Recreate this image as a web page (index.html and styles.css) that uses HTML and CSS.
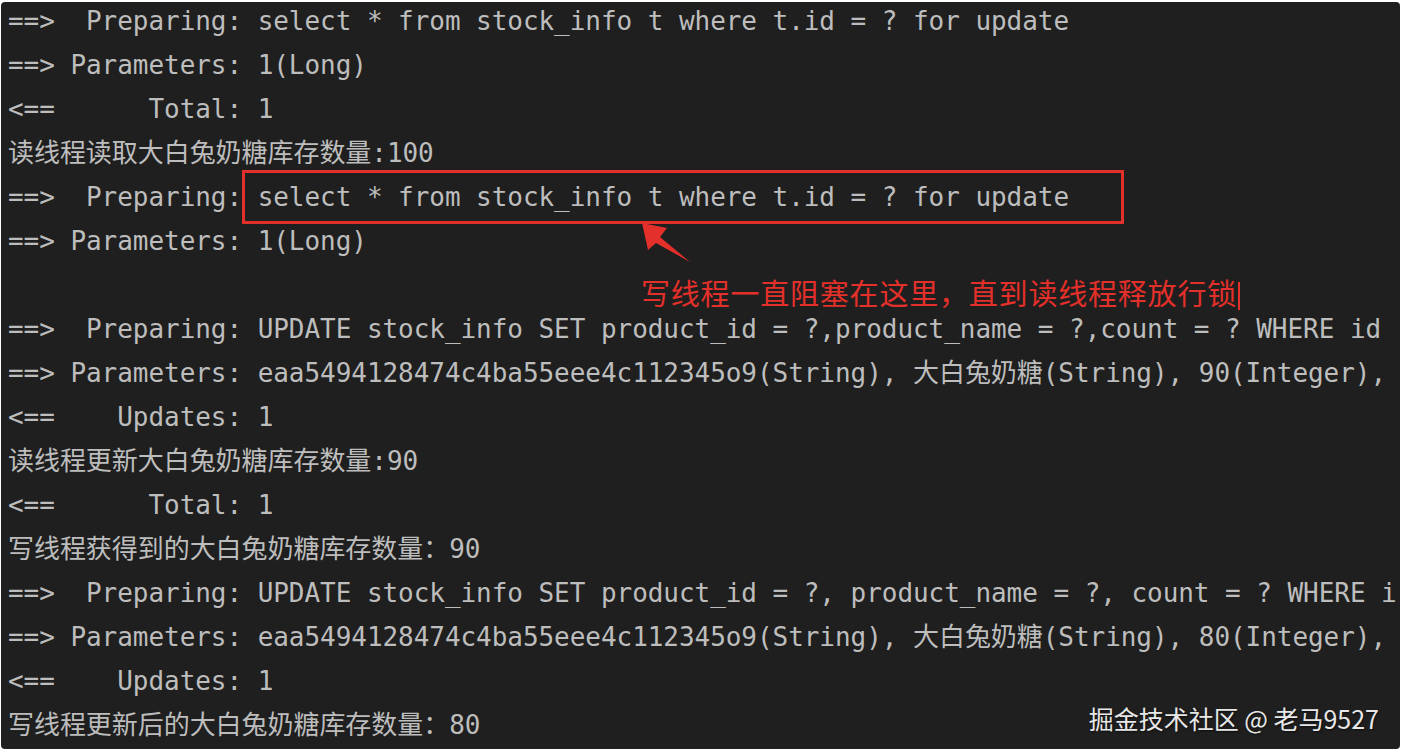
FILE: index.html
```html
<!DOCTYPE html>
<html lang="zh">
<head>
<meta charset="utf-8">
<title>log</title>
<link rel="stylesheet" href="styles.css">
</head>
<body>
<div class="term">
  <div class="log">
<div class="ln">==>  Preparing: select * from stock_info t where t.id = ? for update</div>
<div class="ln">==> Parameters: 1(Long)</div>
<div class="ln">&lt;==      Total: 1</div>
<div class="ln">读线程读取大白兔奶糖库存数量:100</div>
<div class="ln">==>  Preparing: select * from stock_info t where t.id = ? for update</div>
<div class="ln">==> Parameters: 1(Long)</div>
<div class="ln"></div>
<div class="ln">==>  Preparing: UPDATE stock_info SET product_id = ?,product_name = ?,count = ? WHERE id</div>
<div class="ln">==> Parameters: eaa5494128474c4ba55eee4c112345o9(String), 大白兔奶糖(String), 90(Integer),</div>
<div class="ln">&lt;==    Updates: 1</div>
<div class="ln">读线程更新大白兔奶糖库存数量:90</div>
<div class="ln">&lt;==      Total: 1</div>
<div class="ln">写线程获得到的大白兔奶糖库存数量：90</div>
<div class="ln">==>  Preparing: UPDATE stock_info SET product_id = ?, product_name = ?, count = ? WHERE i</div>
<div class="ln">==> Parameters: eaa5494128474c4ba55eee4c112345o9(String), 大白兔奶糖(String), 80(Integer),</div>
<div class="ln">&lt;==    Updates: 1</div>
<div class="ln">写线程更新后的大白兔奶糖库存数量：80</div>
  </div>
  <div class="hl-box"></div>
  <svg class="arrow" width="60" height="50" viewBox="0 0 60 50">
    <polygon points="6,5 31,10 24,19 54,44 20,25 12,32" fill="#e4302a"/>
  </svg>
  <div class="note">写线程一直阻塞在这里，直到读线程释放行锁<span class="caret"></span></div>
  <div class="mark">掘金技术社区 @ 老马9527</div>
</div>
</body>
</html>
```
FILE: styles.css
```css
html, body {
  margin: 0;
  padding: 0;
  background: #ffffff;
}
body {
  width: 1402px;
  height: 752px;
  overflow: hidden;
}
.term {
  position: relative;
  margin: 2px 2px 0 1px;
  height: 747px;
  background: #1f1f1f;
  border-radius: 4px;
  overflow: hidden;
  padding-left: 7px;
}
.log {
  margin-top: -3px;
}
.ln {
  height: 44px;
  line-height: 44px;
  white-space: pre;
  font-family: "DejaVu Sans Mono", "Noto Sans CJK SC", monospace;
  font-size: 26px;
  letter-spacing: -0.05px;
  color: #bdbdbd;
}
.hl-box {
  position: absolute;
  left: 241px;
  top: 168px;
  width: 876px;
  height: 48px;
  border: 3px solid #e4302a;
}
.arrow {
  position: absolute;
  left: 635px;
  top: 216px;
}
.note {
  position: absolute;
  left: 640px;
  top: 272px;
  line-height: 36px;
  font-family: "Noto Sans CJK SC", sans-serif;
  font-size: 29px;
  letter-spacing: 0.8px;
  color: #e4302a;
  white-space: nowrap;
}
.caret {
  display: inline-block;
  width: 2px;
  height: 28px;
  background: #e4302a;
  vertical-align: -5px;
  margin-left: 1px;
}
.mark {
  position: absolute;
  right: 21px;
  bottom: 16px;
  line-height: 30px;
  font-family: "Noto Sans CJK SC", sans-serif;
  font-size: 25px;
  color: #e8e8e8;
  text-shadow: 1px 1px 2px rgba(0,0,0,0.6);
  white-space: nowrap;
}
```
